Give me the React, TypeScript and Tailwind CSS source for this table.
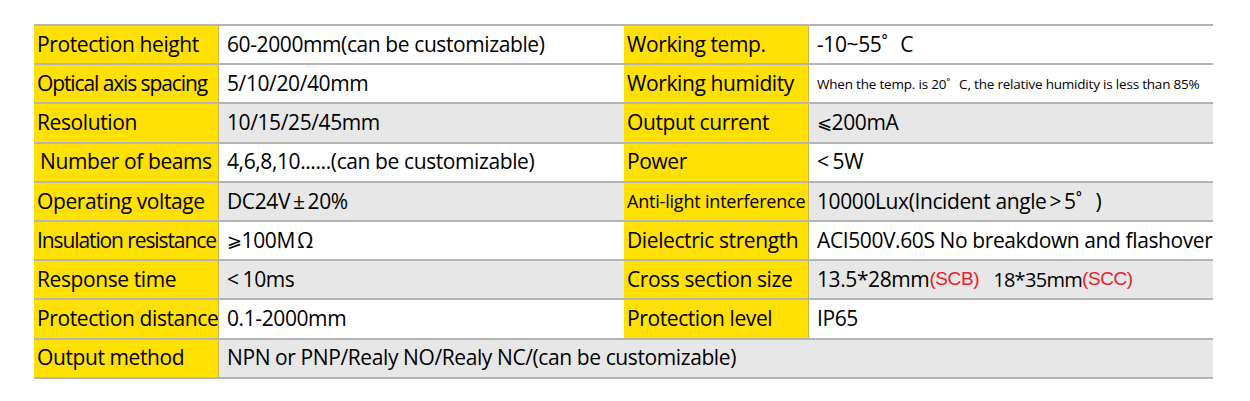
import type { ReactNode } from "react";

type Cell = { label: ReactNode; value: ReactNode };

const red = "font-['Liberation_Sans'] text-[19px] text-[#e8202a]";

const ROWS: { left: Cell; right?: Cell; gray?: boolean }[] = [
  {
    left: { label: "Protection height", value: "60-2000mm(can be customizable)" },
    right: {
      label: "Working temp.",
      value: (
        <>
          -10~55˚<span className="ml-[13px]">C</span>
        </>
      ),
    },
  },
  {
    left: {
      label: <span className="tracking-[-1.1px]">Optical axis spacing</span>,
      value: "5/10/20/40mm",
    },
    right: {
      label: "Working humidity",
      value: (
        <span className="text-[13.5px] tracking-[-0.2px]">
          When the temp. is 20˚<span className="ml-[9px]">C, the relative humidity is less than 85%</span>
        </span>
      ),
    },
  },
  {
    left: { label: "Resolution", value: "10/15/25/45mm" },
    right: {
      label: "Output current",
      value: (
        <>
          <span className="font-['DejaVu_Sans'] text-[18px] font-light">⩽</span>200mA
        </>
      ),
    },
    gray: true,
  },
  {
    left: { label: <span className="pl-[3px]">Number of beams</span>, value: "4,6,8,10......(can be customizable)" },
    right: {
      label: "Power",
      value: (
        <>
          <span className="mr-[4px]">&lt;</span>5W
        </>
      ),
    },
  },
  {
    left: {
      label: "Operating voltage",
      value: (
        <>
          DC24V<span className="mx-[3px]">±</span>20%
        </>
      ),
    },
    right: {
      label: <span className="text-[18px] tracking-[-0.2px]">Anti-light interference</span>,
      value: (
        <>
          10000Lux(Incident angle<span className="mx-[3px]">&gt;</span>5˚<span className="ml-[14px]">)</span>
        </>
      ),
    },
    gray: true,
  },
  {
    left: {
      label: <span className="tracking-[-1.1px]">Insulation resistance</span>,
      value: (
        <>
          <span className="font-['DejaVu_Sans'] text-[18px] font-light">⩾</span>100M<span className="ml-[2px]">Ω</span>
        </>
      ),
    },
    right: { label: "Dielectric strength", value: "ACI500V.60S No breakdown and flashover" },
  },
  {
    left: {
      label: "Response time",
      value: (
        <>
          <span className="mr-[4px]">&lt;</span>10ms
        </>
      ),
    },
    right: {
      label: "Cross section size",
      value: (
        <>
          13.5*28mm<span className={red}>(SCB)</span>
          <span className="ml-[14px] text-[20px] tracking-[-0.7px]">18*35mm</span>
          <span className={red}>(SCC)</span>
        </>
      ),
    },
    gray: true,
  },
  {
    left: { label: "Protection distance", value: "0.1-2000mm" },
    right: { label: "Protection level", value: "IP65" },
  },
  {
    left: { label: "Output method", value: "NPN or PNP/Realy NO/Realy NC/(can be customizable)" },
    gray: true,
  },
];

function Label({ children }: { children: ReactNode }) {
  return (
    <div className="flex items-center overflow-hidden whitespace-nowrap border-r border-[#c9b24a] bg-[#ffe000] pl-[3px] text-[21px] tracking-[-0.4px] text-black">
      {children}
    </div>
  );
}

function Value({ children, gray, span }: { children: ReactNode; gray?: boolean; span?: boolean }) {
  return (
    <div
      className={`flex items-center overflow-hidden whitespace-nowrap pl-[8px] text-[21px] tracking-[-0.4px] text-black ${
        gray ? "bg-[#e7e7e7]" : "bg-white"
      } ${span ? "col-span-3" : ""}`}
    >
      {children}
    </div>
  );
}

export default function App() {
  return (
    <div className="h-[401px] w-[1250px] bg-white pl-[34px] pt-[24px] font-['Open_Sans',sans-serif]">
      <div className="grid w-[1179px] grid-cols-[185px_405px_185px_404px] border-t-2 border-[#b4b4b4]">
        {ROWS.map((row, i) => (
          <div
            key={i}
            className="col-span-4 grid h-[39.2px] grid-cols-subgrid border-b-2 border-[#b4b4b4]"
          >
            <Label>{row.left.label}</Label>
            <Value gray={row.gray} span={!row.right}>
              {row.left.value}
            </Value>
            {row.right && (
              <>
                <Label>{row.right.label}</Label>
                <Value gray={row.gray}>{row.right.value}</Value>
              </>
            )}
          </div>
        ))}
      </div>
    </div>
  );
}
